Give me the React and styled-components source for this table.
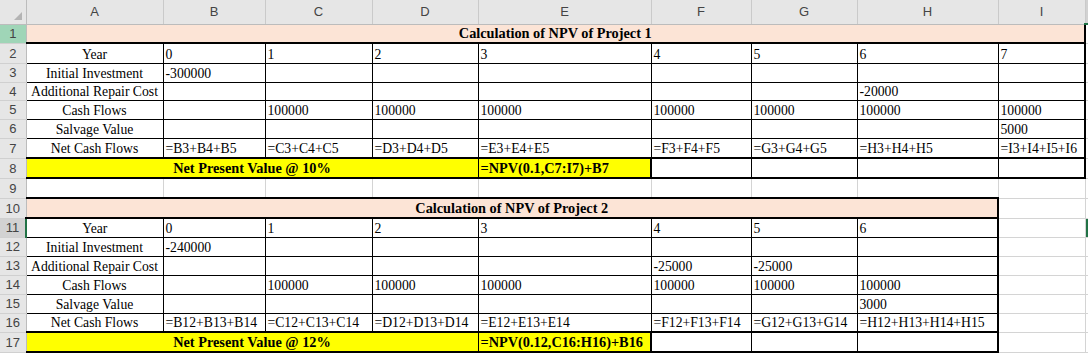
import React from 'react';
import styled, { createGlobalStyle, css } from 'styled-components';

const GlobalStyle = createGlobalStyle`
  html, body {
    margin: 0;
    padding: 0;
    background: #ffffff;
    overflow: hidden;
  }
`;

const COLS = [
  { name: 'A', w: 137 },
  { name: 'B', w: 102 },
  { name: 'C', w: 107 },
  { name: 'D', w: 106 },
  { name: 'E', w: 173 },
  { name: 'F', w: 100 },
  { name: 'G', w: 106 },
  { name: 'H', w: 141 },
  { name: 'I', w: 87 },
  { name: 'J', w: 64 },
];

const FILLS = {
  peach: '#fce4d6',
  yellow: '#ffff00',
};

const Sheet = styled.table`
  border-collapse: collapse;
  table-layout: fixed;
  width: ${26 + COLS.reduce((s, c) => s + c.w, 0)}px;
`;

const Row = styled.tr`
  height: ${p => p.$h}px;
`;

const Corner = styled.th`
  width: 26px;
  padding: 0;
  background: #e6e6e6;
  border-right: 1px solid #bcbcbc;
  border-bottom: 1px solid #bcbcbc;
  vertical-align: bottom;

  svg {
    display: block;
    margin: 0 4px 4px auto;
  }
`;

const ColHead = styled.th`
  padding: 0;
  background: ${p => (p.$selected ? '#d2d2d2' : '#e6e6e6')};
  border-right: 1px solid #cacaca;
  border-bottom: ${p => (p.$selected ? '2px solid #217346' : '1px solid #bcbcbc')};
  font-family: 'Liberation Sans', Arial, sans-serif;
  font-size: 13px;
  font-weight: 400;
  color: #444;
  text-align: center;
  vertical-align: middle;
`;

const RowHead = styled.th`
  padding: 0;
  background: ${p => (p.$state === 'active' ? '#9fd5b7' : p.$state === 'selected' ? '#d2d2d2' : '#e6e6e6')};
  border-right: ${p => (p.$state === 'selected' ? '2px solid #217346' : '1px solid #bcbcbc')};
  border-bottom: 1px solid #d0d0d0;
  font-family: 'Liberation Sans', Arial, sans-serif;
  font-size: 13px;
  font-weight: 400;
  color: #444;
  text-align: center;
  vertical-align: middle;
`;

const Cell = styled.td`
  padding: 0 2px 1px;
  vertical-align: bottom;
  white-space: nowrap;
  overflow: hidden;
  font-family: 'Liberation Serif', 'Times New Roman', serif;
  font-size: ${p => (p.$bold ? '14.3px' : '13.7px')};
  font-weight: ${p => (p.$bold ? 700 : 400)};
  line-height: 15px;
  text-align: ${p => p.$align || 'left'};
  color: #000;
  background: ${p => FILLS[p.$fill] || '#ffffff'};
  border: 1px solid #000;
  ${p => p.$thickTop && css`border-top-width: 2px;`}
  ${p => p.$thickBottom && css`border-bottom-width: 2px;`}
  ${p => p.$thickRight && css`border-right-width: 2px;`}
`;

const GridCell = styled.td`
  padding: 0;
  border: 1px solid #d4d4d4;
  background: #ffffff;
  ${p => p.$cursor && css`box-shadow: inset 2px 0 0 #217346, inset 0 2px 0 #217346, inset 0 -2px 0 #217346;`}
`;

const projects = [
  {
    start: 1,
    span: 9,
    firstTop: false,
    title: 'Calculation of NPV of Project 1',
    rows: [
      ['Year', '0', '1', '2', '3', '4', '5', '6', '7'],
      ['Initial Investment', '-300000', '', '', '', '', '', '', ''],
      ['Additional Repair Cost', '', '', '', '', '', '', '-20000', ''],
      ['Cash Flows', '', '100000', '100000', '100000', '100000', '100000', '100000', '100000'],
      ['Salvage Value', '', '', '', '', '', '', '', '5000'],
      ['Net Cash Flows', '=B3+B4+B5', '=C3+C4+C5', '=D3+D4+D5', '=E3+E4+E5', '=F3+F4+F5', '=G3+G4+G5', '=H3+H4+H5', '=I3+I4+I5+I6'],
    ],
    npvLabel: 'Net Present Value @ 10%',
    npvFormula: '=NPV(0.1,C7:I7)+B7',
  },
  {
    start: 10,
    span: 8,
    firstTop: true,
    title: 'Calculation of NPV of Project 2',
    rows: [
      ['Year', '0', '1', '2', '3', '4', '5', '6'],
      ['Initial Investment', '-240000', '', '', '', '', '', ''],
      ['Additional Repair Cost', '', '', '', '', '-25000', '-25000', ''],
      ['Cash Flows', '', '100000', '100000', '100000', '100000', '100000', '100000'],
      ['Salvage Value', '', '', '', '', '', '', '3000'],
      ['Net Cash Flows', '=B12+B13+B14', '=C12+C13+C14', '=D12+D13+D14', '=E12+E13+E14', '=F12+F13+F14', '=G12+G13+G14', '=H12+H13+H14+H15'],
    ],
    npvLabel: 'Net Present Value @ 12%',
    npvFormula: '=NPV(0.12,C16:H16)+B16',
  },
];

const HEIGHTS = [0, 19, 20, 19, 18, 19, 19, 20, 20, 20, 20, 19, 19, 19, 19, 19, 19, 20];

const rowState = n => (n === 1 ? 'active' : n === 11 ? 'selected' : undefined);

const fillGrid = (from, rowNum) =>
  COLS.slice(from).map(c => <GridCell key={c.name} $cursor={rowNum === 11 && c.name === 'J'} />);

const buildRows = () => {
  const out = [];
  projects.forEach((p, pi) => {
    let n = p.start;
    out.push(
      <Row key={n} $h={HEIGHTS[n]}>
        <RowHead $state={rowState(n)}>{n}</RowHead>
        <Cell colSpan={p.span} $bold $align="center" $fill="peach" $thickTop={p.firstTop} $thickBottom $thickRight>
          {p.title}
        </Cell>
        {fillGrid(p.span, n)}
      </Row>
    );
    p.rows.forEach(r => {
      n += 1;
      const num = n;
      out.push(
        <Row key={num} $h={HEIGHTS[num]}>
          <RowHead $state={rowState(num)}>{num}</RowHead>
          {r.map((v, i) => (
            <Cell key={i} $align={i === 0 ? 'center' : 'left'} $thickRight={i === r.length - 1}>
              {v}
            </Cell>
          ))}
          {fillGrid(p.span, num)}
        </Row>
      );
    });
    n += 1;
    const npvRow = n;
    out.push(
      <Row key={npvRow} $h={HEIGHTS[npvRow]}>
        <RowHead $state={rowState(npvRow)}>{npvRow}</RowHead>
        <Cell colSpan={4} $bold $align="center" $fill="yellow" $thickTop $thickBottom>
          {p.npvLabel}
        </Cell>
        <Cell $bold $fill="yellow" $thickTop $thickBottom $thickRight>
          {p.npvFormula}
        </Cell>
        {COLS.slice(5, p.span).map((c, i) => (
          <Cell key={c.name} $thickTop $thickBottom $thickRight={5 + i === p.span - 1} />
        ))}
        {fillGrid(p.span, npvRow)}
      </Row>
    );
    if (pi === 0) {
      out.push(
        <Row key={9} $h={HEIGHTS[9]}>
          <RowHead>9</RowHead>
          {fillGrid(0, 9)}
        </Row>
      );
    }
  });
  return out;
};

// the J column only peeks 3px into the window, so its letter stays hidden
const App = () => (
  <>
    <GlobalStyle />
    <Sheet>
      <colgroup>
        <col style={{ width: 26 }} />
        {COLS.map(c => (
          <col key={c.name} style={{ width: c.w }} />
        ))}
      </colgroup>
      <thead>
        <Row $h={24}>
          <Corner>
            <svg width="8" height="8" viewBox="0 0 8 8">
              <polygon points="8,0 8,8 0,8" fill="#b4b4b4" />
            </svg>
          </Corner>
          {COLS.map(c => (
            <ColHead key={c.name} $selected={c.name === 'J'}>
              {c.name === 'J' ? '' : c.name}
            </ColHead>
          ))}
        </Row>
      </thead>
      <tbody>{buildRows()}</tbody>
    </Sheet>
  </>
);

export default App;
